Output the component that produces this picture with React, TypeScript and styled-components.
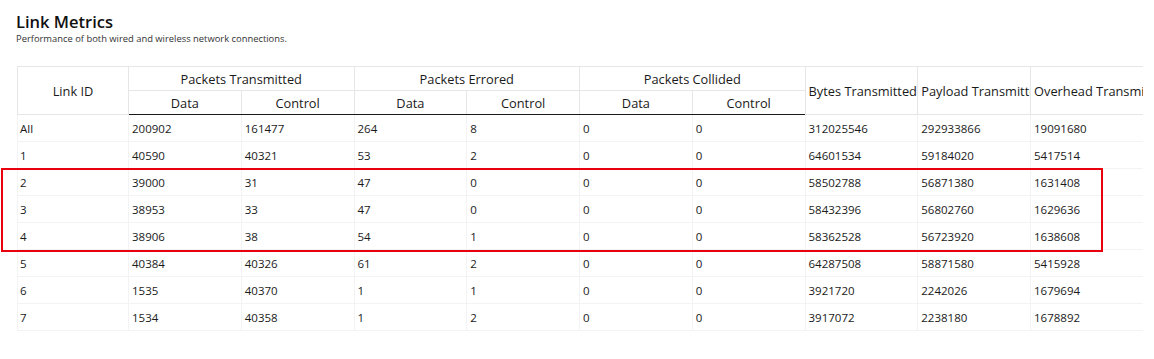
import React from 'react';
import styled, { createGlobalStyle } from 'styled-components';

const GlobalStyle = createGlobalStyle`
  html, body {
    margin: 0;
    padding: 0;
    background: #ffffff;
  }
  body {
    font-family: 'Open Sans', 'Noto Sans', sans-serif;
    color: #1f1f1f;
  }
`;

const Page = styled.div`
  position: relative;
  width: 1154px;
  height: 359px;
  padding: 11px 0 0 16px;
  box-sizing: border-box;
  overflow: hidden;
`;

const Title = styled.h1`
  margin: 0;
  font-size: 16.5px;
  font-weight: 600;
  line-height: 22px;
  color: #111111;
`;

const Subtitle = styled.p`
  margin: 0;
  font-size: 9.4px;
  line-height: 12px;
  color: #333333;
`;

const TableWrap = styled.div`
  margin: 21px 0 0 1px;
  width: 1126px;
  overflow: hidden;
`;

const Table = styled.table`
  table-layout: fixed;
  border-collapse: collapse;
  width: 1126px;
`;

const HeadCell = styled.th<{ $align?: 'left' | 'center' }>`
  height: 23px;
  padding: 0 3px;
  font-size: 12.8px;
  font-weight: 400;
  color: #1a1a1a;
  text-align: ${(p) => p.$align ?? 'center'};
  white-space: nowrap;
  overflow: hidden;
  border: 1px solid #e6e6e6;
  vertical-align: middle;
`;

const HeadRow = styled.tr`
  &:last-child th {
    border-bottom: 1px solid #1a1a1a;
  }
`;

const Cell = styled.td`
  height: 26px;
  padding: 0 3px;
  font-size: 11.5px;
  color: #1a1a1a;
  white-space: nowrap;
  overflow: hidden;
  border: 1px solid #f3f3f3;
  border-top: none;
  &:first-child {
    padding-left: 2px;
  }
`;

const Highlight = styled.div`
  position: absolute;
  left: 1px;
  top: 168px;
  width: 1102px;
  height: 84px;
  box-sizing: border-box;
  border: 2px solid #e8000e;
  pointer-events: none;
`;

interface LinkRow {
  readonly id: string;
  readonly values: number[];
}

const rows: LinkRow[] = [
  { id: 'All', values: [200902, 161477, 264, 8, 0, 0, 312025546, 292933866, 19091680] },
  { id: '1', values: [40590, 40321, 53, 2, 0, 0, 64601534, 59184020, 5417514] },
  { id: '2', values: [39000, 31, 47, 0, 0, 0, 58502788, 56871380, 1631408] },
  { id: '3', values: [38953, 33, 47, 0, 0, 0, 58432396, 56802760, 1629636] },
  { id: '4', values: [38906, 38, 54, 1, 0, 0, 58362528, 56723920, 1638608] },
  { id: '5', values: [40384, 40326, 61, 2, 0, 0, 64287508, 58871580, 5415928] },
  { id: '6', values: [1535, 40370, 1, 1, 0, 0, 3921720, 2242026, 1679694] },
  { id: '7', values: [1534, 40358, 1, 2, 0, 0, 3917072, 2238180, 1678892] },
];

const groups = ['Packets Transmitted', 'Packets Errored', 'Packets Collided'];
const totals = ['Bytes Transmitted', 'Payload Transmitted', 'Overhead Transmitted'];

export default function App() {
  return (
    <>
      <GlobalStyle />
      <Page>
        <Title>Link Metrics</Title>
        <Subtitle>Performance of both wired and wireless network connections.</Subtitle>

        <TableWrap>
          <Table>
            <colgroup>
              <col style={{ width: 111 }} />
              {Array.from({ length: 9 }).map((_, i) => (
                <col key={i} style={{ width: 112.75 }} />
              ))}
            </colgroup>
            <thead>
              <HeadRow>
                <HeadCell rowSpan={2}>Link ID</HeadCell>
                {groups.map((g) => (
                  <HeadCell key={g} colSpan={2}>
                    {g}
                  </HeadCell>
                ))}
                {totals.map((t) => (
                  <HeadCell key={t} rowSpan={2} $align="left">
                    {t}
                  </HeadCell>
                ))}
              </HeadRow>
              <HeadRow>
                {groups.map((g) => (
                  <React.Fragment key={g}>
                    <HeadCell>Data</HeadCell>
                    <HeadCell>Control</HeadCell>
                  </React.Fragment>
                ))}
              </HeadRow>
            </thead>
            <tbody>
              {rows.map((r) => (
                <tr key={r.id}>
                  <Cell>{r.id}</Cell>
                  {r.values.map((v, i) => (
                    <Cell key={i}>{v}</Cell>
                  ))}
                </tr>
              ))}
            </tbody>
          </Table>
        </TableWrap>

        <Highlight />
      </Page>
    </>
  );
}
